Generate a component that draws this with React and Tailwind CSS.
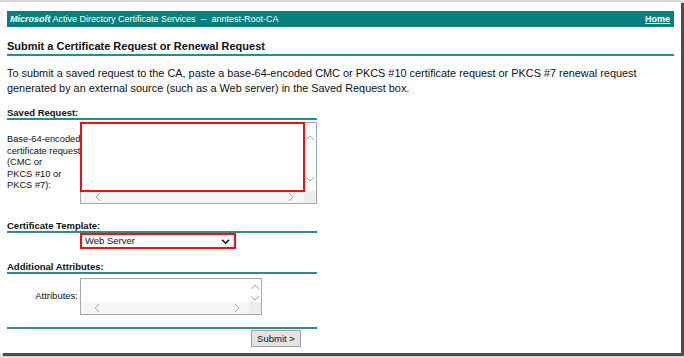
import React from 'react';

const teal = 'border-[#2e8b8b]';

// little chevron used by the fake scrollbars / select
const Chevron = ({ dir = 'down', className = '', stroke = '#a8a8a8', width = 1 }) => {
    const paths = {
        up: 'M1 6 L5 2 L9 6',
        down: 'M1 2 L5 6 L9 2',
        left: 'M6 1 L2 5 L6 9',
        right: 'M2 1 L6 5 L2 9',
    };
    const box = dir === 'up' || dir === 'down' ? '0 0 10 8' : '0 0 8 10';
    return (
        <svg viewBox={box} className={className} fill="none" stroke={stroke} strokeWidth={width}>
            <path d={paths[dir]} />
        </svg>
    );
};

// Looks like an IE textarea with both scrollbars visible
const FakeTextarea = ({ w, h, red = false, upY, downY, leftX, rightX }) => (
    <div className="relative shrink-0 border border-[#a9a9a9] bg-white" style={{ width: w, height: h }}>
        <div className="absolute right-0 bottom-0 w-[12px] h-[12px] bg-[#ececec]" />
        <div className="absolute left-0 right-[12px] bottom-0 h-[12px] bg-[#f5f5f5]" />
        <span className="absolute right-[1px] flex" style={{ top: upY }}>
            <Chevron dir="up" className="w-[10px] h-[8px]" />
        </span>
        <span className="absolute right-[1px] flex" style={{ top: downY }}>
            <Chevron dir="down" className="w-[10px] h-[8px]" />
        </span>
        <span className="absolute bottom-[1px] flex" style={{ left: leftX }}>
            <Chevron dir="left" className="w-[8px] h-[10px]" />
        </span>
        <span className="absolute bottom-[1px] flex" style={{ left: rightX }}>
            <Chevron dir="right" className="w-[8px] h-[10px]" />
        </span>
        {red && (
            <div className="absolute left-[-1px] top-[-1px] right-[11px] bottom-[11px] border-2 border-[#ee1111]" />
        )}
    </div>
);

const SectionHead = ({ children, className = '' }) => (
    <div className={`font-bold text-[9.5px] leading-[11px] border-b-2 ${teal} ${className}`}>
        {children}
    </div>
);

export default function App() {
    return (
        <div className="w-[684px] h-[358px] bg-[#e8e8e8] font-['Liberation_Sans',Arial,sans-serif] text-[#111]">
            <div className="w-[681px] h-[353px] bg-white border-t-2 border-[#d6d6d6] shadow-[3px_3px_1px_#4d4d4d] px-[7px]">
                {/* header bar */}
                <div className="mt-[9px] h-[16px] bg-[#087f7f] flex items-center justify-between pl-[3px] pr-[4px] text-white text-[9px] leading-none">
                    <span>
                        <b><i>Microsoft</i></b> Active Directory Certificate Services &nbsp;--&nbsp; anntest-Root-CA
                    </span>
                    <a href="#" className="font-bold underline">Home</a>
                </div>

                <div className={`mt-[13px] font-bold text-[11px] leading-[13px] pb-[1px] border-b-2 ${teal}`}>
                    Submit a Certificate Request or Renewal Request
                </div>

                <p className="mt-[10px] text-[10.9px] leading-[15px]">
                    To submit a saved request to the CA, paste a base-64-encoded CMC or PKCS #10 certificate request or PKCS #7 renewal request generated by an external source (such as a Web server) in the Saved Request box.
                </p>

                <div className="w-[310px]">
                    <SectionHead className="mt-[11px]">Saved Request:</SectionHead>
                    <div className="flex items-center mt-[2px]">
                        <div className="w-[73px] shrink-0 whitespace-nowrap text-[9.3px] leading-[11.5px]">
                            Base-64-encoded<br />certificate request<br />(CMC or<br />PKCS #10 or<br />PKCS #7):
                        </div>
                        <FakeTextarea w={237} h={82} red upY={11} downY={52} leftX={13} rightX={206} />
                    </div>

                    <SectionHead className="mt-[16px]">Certificate Template:</SectionHead>
                    <div className="flex">
                        <div className="w-[73px] shrink-0" />
                        <div className="w-[156px] h-[16px] border-2 border-[#ee1111] flex items-center justify-between pl-[3px] pr-[4px] text-[9.5px]">
                            <span>Web Server</span>
                            <Chevron dir="down" stroke="#111" width={1.8} className="w-[9px] h-[7px]" />
                        </div>
                    </div>

                    <SectionHead className="mt-[12px]">Additional Attributes:</SectionHead>
                    <div className="flex items-center mt-[4px]">
                        <div className="w-[73px] shrink-0 text-right pr-[2px] text-[9.5px]">Attributes:</div>
                        <FakeTextarea w={182} h={37} upY={4} downY={15} leftX={12} rightX={152} />
                    </div>

                    <div className={`mt-[12px] border-b-2 ${teal}`} />
                    <div className="flex justify-end pr-[16px] mt-[1px]">
                        <button className="w-[50px] h-[17px] bg-[#e3e3e3] border border-[#a0a0a0] text-[9.5px] leading-none">
                            Submit &gt;
                        </button>
                    </div>
                </div>
            </div>
        </div>
    );
}
